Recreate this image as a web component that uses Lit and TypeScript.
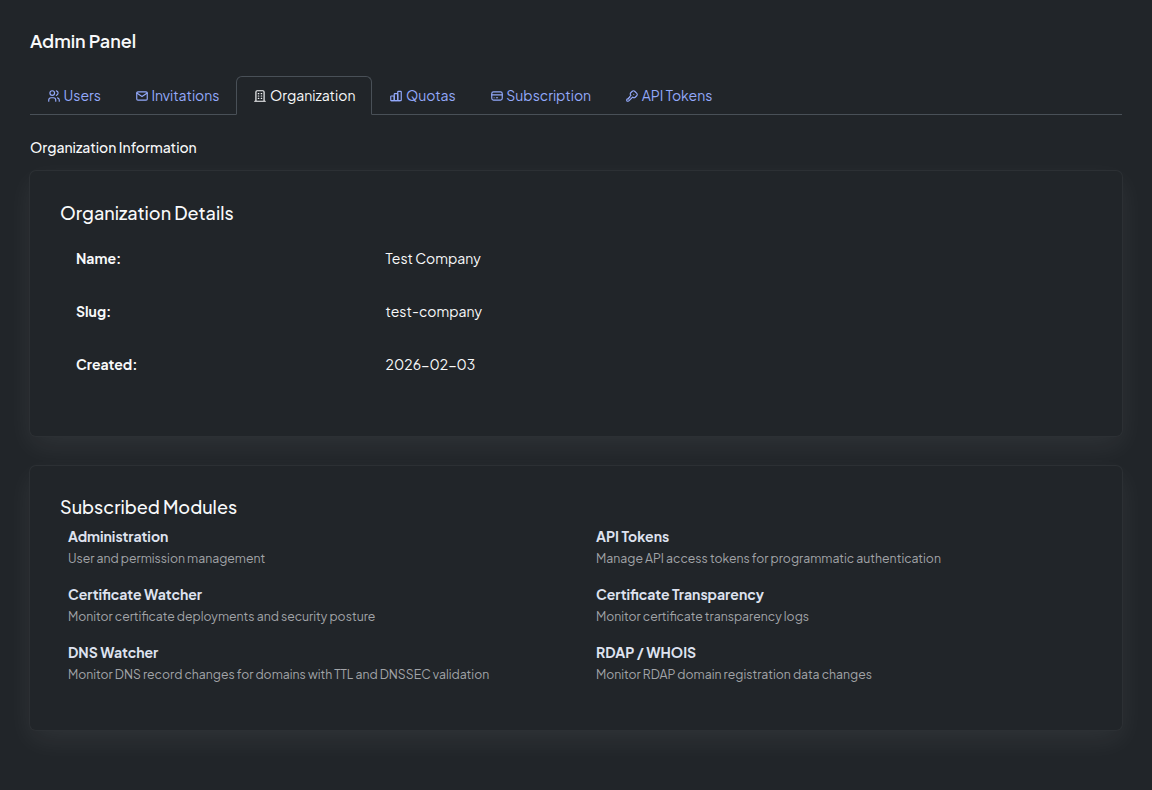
import { LitElement, html, css, svg } from "lit";
import { customElement, state } from "lit/decorators.js";
import { classMap } from "lit/directives/class-map.js";

const icons: Record<string, unknown> = {
  users: svg`<circle cx="9" cy="7" r="4"/><path d="M3 21v-2a4 4 0 0 1 4 -4h4a4 4 0 0 1 4 4v2M16 3.13a4 4 0 0 1 0 7.75M21 21v-2a4 4 0 0 0 -3 -3.85"/>`,
  mail: svg`<rect x="3" y="5" width="18" height="14" rx="2"/><path d="M3 7l9 6l9 -6"/>`,
  building: svg`<path d="M3 21h18M9 8h1M9 12h1M9 16h1M14 8h1M14 12h1M14 16h1M5 21v-16a2 2 0 0 1 2 -2h10a2 2 0 0 1 2 2v16"/>`,
  chart: svg`<rect x="3" y="12" width="6" height="8" rx="1"/><rect x="9" y="8" width="6" height="12" rx="1"/><rect x="15" y="4" width="6" height="16" rx="1"/><path d="M4 20h14"/>`,
  card: svg`<rect x="3" y="5" width="18" height="14" rx="3"/><path d="M3 10h18M7 15h.01M11 15h2"/>`,
  key: svg`<path d="M16.555 3.843l3.602 3.602a2.877 2.877 0 0 1 0 4.069l-2.643 2.643a2.877 2.877 0 0 1 -4.069 0l-.301 -.301l-6.558 6.558a2 2 0 0 1 -1.239 .578l-.175 .008h-1.172a1 1 0 0 1 -.993 -.883l-.007 -.117v-1.172a2 2 0 0 1 .467 -1.284l.119 -.13l.414 -.414h2v-2h2v-2l2.144 -2.144l-.301 -.301a2.877 2.877 0 0 1 0 -4.069l2.643 -2.643a2.877 2.877 0 0 1 4.069 0zM15 9h.01"/>`,
};

const tabs = [
  ["users", "Users"],
  ["mail", "Invitations"],
  ["building", "Organization"],
  ["chart", "Quotas"],
  ["card", "Subscription"],
  ["key", "API Tokens"],
];

const details = [
  ["Name:", "Test Company"],
  ["Slug:", "test-company"],
  ["Created:", "2026-02-03"],
];

const modules = [
  ["Administration", "User and permission management"],
  ["API Tokens", "Manage API access tokens for programmatic authentication"],
  ["Certificate Watcher", "Monitor certificate deployments and security posture"],
  ["Certificate Transparency", "Monitor certificate transparency logs"],
  ["DNS Watcher", "Monitor DNS record changes for domains with TTL and DNSSEC validation"],
  ["RDAP / WHOIS", "Monitor RDAP domain registration data changes"],
];

@customElement("app-root")
export class AppRoot extends LitElement {
  @state() private active = "Organization";

  static styles = css`
    :host {
      display: block;
      box-sizing: border-box;
      min-height: 100vh;
      padding: 30px;
      background: #212529;
      color: #f8f9fa;
      font: 400 14px/21px "Plus Jakarta Sans", Inter, sans-serif;
    }
    h1, h2, h3, dl, dd, p { margin: 0; }
    h1 { font-size: 18px; line-height: 22px; font-weight: 600; }
    .tabs {
      display: flex;
      margin-top: 24px;
      border-bottom: 1px solid #495057;
    }
    .tab {
      display: flex;
      align-items: center;
      gap: 2.5px;
      margin-bottom: -1px;
      padding: 8px 16px;
      border: 1px solid transparent;
      border-radius: 6px 6px 0 0;
      background: none;
      color: #93a9fb;
      font: inherit;
      white-space: nowrap;
      cursor: pointer;
    }
    .tab.active {
      color: #f8f9fa;
      background: #212529;
      border-color: #495057 #495057 #212529;
    }
    .icon {
      width: 14px;
      height: 14px;
      fill: none;
      stroke: currentColor;
      stroke-width: 2;
      stroke-linecap: round;
      stroke-linejoin: round;
    }
    h2 { margin: 24px 0 15px; font-size: 14px; line-height: 17px; font-weight: 500; }
    .card {
      box-sizing: border-box;
      height: 265px;
      padding: 30px;
      border-radius: 6px;
      background: #212529;
      box-shadow: 0 0 0 1px #2c3034, 0 10px 28px rgba(255, 255, 255, 0.065);
    }
    .card + .card { height: 264px; margin-top: 30px; padding-top: 29px; }
    h3 { font-size: 18px; line-height: 23px; font-weight: 500; }
    .details { margin-top: 8px; }
    .row { display: grid; grid-template-columns: 30% 1fr; }
    .row > * { padding: 16px; }
    dt { font-weight: 700; }
    .modules { display: grid; grid-template-columns: 528px 1fr; }
    .module { padding: 8px 8px 7px; }
    .name { margin-bottom: 1px; color: #dee2ef; font-weight: 700; }
    .desc { color: #a1a4a8; font-size: 12.25px; }
  `;

  render() {
    return html`
      <h1>Admin Panel</h1>
      <nav class="tabs">
        ${tabs.map(([icon, label]) => html`
          <button class=${classMap({ tab: true, active: label === this.active })} @click=${() => (this.active = label)}>
            <svg class="icon" viewBox="0 0 24 24" aria-hidden="true">${icons[icon]}</svg><span>${label}</span>
          </button>`)}
      </nav>
      <h2>Organization Information</h2>
      <section class="card">
        <h3>Organization Details</h3>
        <dl class="details">
          ${details.map(([k, v]) => html`<div class="row"><dt>${k}</dt><dd>${v}</dd></div>`)}
        </dl>
      </section>
      <section class="card">
        <h3>Subscribed Modules</h3>
        <div class="modules">
          ${modules.map(([n, d]) => html`<div class="module"><p class="name">${n}</p><p class="desc">${d}</p></div>`)}
        </div>
      </section>
    `;
  }
}
